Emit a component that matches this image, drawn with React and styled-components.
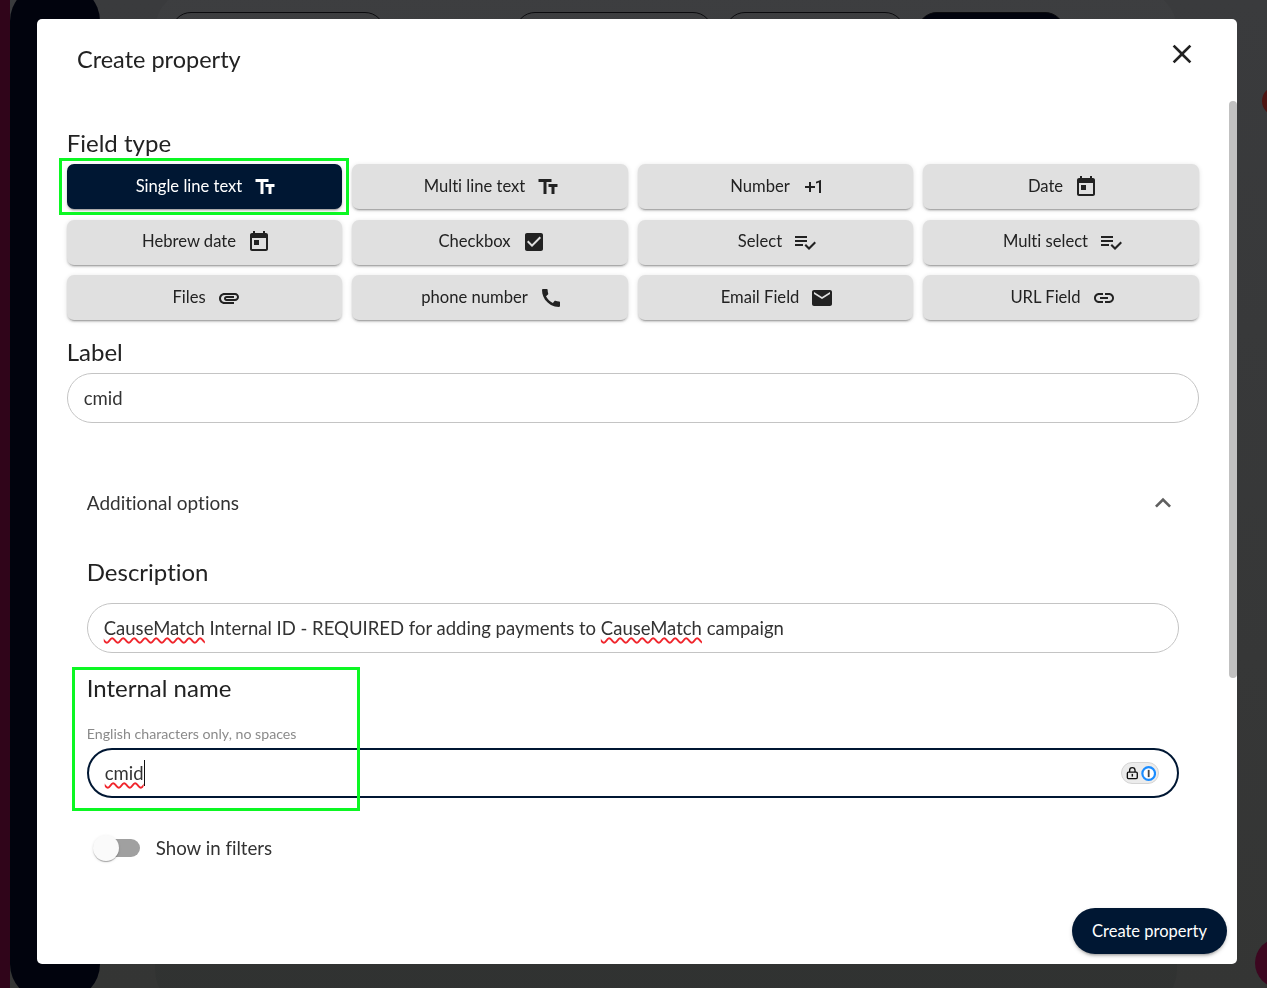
import React from "react";
import styled, { createGlobalStyle } from "styled-components";

const FONT = `Lato, "Noto Sans", "Liberation Sans", sans-serif`;

const GlobalStyle = createGlobalStyle`
  html, body {
    margin: 0;
    padding: 0;
    height: 100%;
    overflow: hidden;
    background: #38393b;
    font-family: ${FONT};
    font-variant-ligatures: none;
  }
  * { box-sizing: border-box; }
`;

const Shell = styled.div`
  display: flex;
  width: 1267px;
  height: 988px;
  overflow: hidden;
  background: linear-gradient(#3a3b3d, #343534);
`;

const Strip = styled.div`
  width: 10px;
  flex-shrink: 0;
  background: #30051a;
`;

const Sidebar = styled.div`
  width: 90px;
  flex-shrink: 0;
  margin: -15px 0 -12px;
  border-radius: 36px;
  background: #01030d;
`;

const Main = styled.div`
  flex: 1;
  display: flex;
  padding: 0 90px 0 55px;
`;

const TopPanel = styled.div`
  flex: 1;
  display: flex;
  margin-top: -10px;
  height: 1020px;
  padding: 22px 0 0 16px;
  border-radius: 40px;
  background: linear-gradient(#3d3e40, #303231);
`;

const TopPill = styled.div`
  width: ${(p) => p.$w}px;
  margin-right: ${(p) => p.$gap}px;
  height: 40px;
  border-radius: 20px;
  border: 1px solid #0b0b0e;
  background: ${(p) => (p.$filled ? "#01030d" : "transparent")};
`;

const Dot = styled.div`
  position: absolute;
  width: ${(p) => p.$size}px;
  height: ${(p) => p.$size}px;
  left: ${(p) => p.$x}px;
  top: ${(p) => p.$y}px;
  border-radius: 50%;
  background: ${(p) => p.$color};
`;

const Dialog = styled.div`
  position: fixed;
  left: 37px;
  top: 19px;
  width: 1200px;
  height: 945px;
  display: flex;
  flex-direction: column;
  border-radius: 5px;
  background: #fff;
  color: #222;
`;

const Header = styled.div`
  position: relative;
  height: 82px;
  flex-shrink: 0;
  padding: 23px 0 0 40px;
`;

const Title = styled.h2`
  margin: 0;
  font-size: 23.5px;
  line-height: 34px;
  font-weight: 400;
  color: #222;
`;

const CloseButton = styled.button`
  position: absolute;
  right: 39px;
  top: 19px;
  width: 32px;
  height: 32px;
  padding: 0;
  border: none;
  background: transparent;
  color: #222;
  font-size: 0;
`;

const Body = styled.div`
  position: relative;
  flex: 1;
  min-height: 0;
  overflow: hidden;
  padding: 28px 38px 0 29.75px;
`;

const ScrollThumb = styled.div`
  position: absolute;
  right: 0;
  top: 0;
  width: 8px;
  height: 577px;
  border-radius: 4px;
  background: #c1c1c1;
`;

const SectionLabel = styled.div`
  font-size: 24px;
  line-height: 28px;
  padding-bottom: 2px;
  color: #222;
  margin-top: ${(p) => p.$top || 0}px;
  margin-bottom: ${(p) => p.$bottom || 0}px;
`;

const TypeGrid = styled.div`
  display: grid;
  grid-template-columns: repeat(4, 275.5px);
  grid-auto-rows: 45px;
  column-gap: 10px;
  row-gap: 10.5px;
`;

const TypeButton = styled.button`
  position: relative;
  display: flex;
  align-items: center;
  justify-content: center;
  gap: 11px;
  border: none;
  border-radius: 7px;
  padding: 0 0 0 4px;
  font-family: ${FONT};
  font-size: 16.6px;
  font-variant-ligatures: none;
  color: ${(p) => (p.$active ? "#fff" : "#222")};
  background: ${(p) => (p.$active ? "#001733" : "#e0e0e0")};
  box-shadow: 0 3px 1px -2px rgba(0, 0, 0, 0.2), 0 2px 2px rgba(0, 0, 0, 0.14),
    0 1px 5px rgba(0, 0, 0, 0.12);
`;

const TypeText = styled.span`
  margin-bottom: 2px;
`;

const Highlight = styled.div`
  position: absolute;
  left: ${(p) => p.$left}px;
  top: ${(p) => p.$top}px;
  width: ${(p) => p.$w}px;
  height: ${(p) => p.$h}px;
  border: 3px solid #0cf723;
  pointer-events: none;
`;

const Field = styled.div`
  display: flex;
  align-items: center;
  height: 50px;
  padding: 0 17px 0 16px;
  border-radius: 25px;
  border: ${(p) => (p.$focused ? "2px solid #001733" : "1px solid #c4c4c4")};
  font-size: 18.5px;
  color: #333;
  margin-top: ${(p) => p.$top || 0}px;
`;

const Misspelled = styled.span`
  text-decoration: underline wavy #f0252c 1.5px;
  text-underline-offset: 2px;
`;

const Caret = styled.span`
  display: inline-block;
  width: 1px;
  height: 26px;
  background: #111;
`;

const LockBadge = styled.div`
  display: flex;
  align-items: center;
  gap: 2px;
  margin-left: auto;
  margin-right: 1px;
  width: 38px;
  height: 22px;
  padding: 0 2px 0 4px;
  border-radius: 11px;
  border: 1px solid #d4d4d4;
  background: #ececec;
`;

const Accordion = styled.div`
  margin-top: 56px;
  padding: 0 20px;
`;

const AccordionSummary = styled.div`
  display: flex;
  align-items: center;
  justify-content: space-between;
  height: 48px;
  font-size: 19px;
  color: #333;

  svg {
    color: #5f5f5f;
  }
`;

const SummaryText = styled.span`
  margin-bottom: 2px;
`;

const NameGroup = styled.div`
  position: relative;
  margin-top: 21px;
`;

const Hint = styled.div`
  margin-top: 21px;
  font-size: 14.2px;
  line-height: 18px;
  color: #8a8a8a;
`;

const ToggleRow = styled.div`
  display: flex;
  align-items: center;
  gap: 16px;
  height: 38px;
  margin-top: 31px;
  padding-left: 7px;
  font-size: 18.7px;
  color: #333;
`;

const ToggleTrack = styled.div`
  position: relative;
  width: 46px;
  height: 18px;
  border-radius: 9px;
  background: #a0a0a0;
`;

const ToggleThumb = styled.div`
  position: absolute;
  left: -1px;
  top: -4px;
  width: 26px;
  height: 26px;
  border-radius: 50%;
  background: #fafafa;
  box-shadow: 0 2px 1px -1px rgba(0, 0, 0, 0.2), 0 1px 1px rgba(0, 0, 0, 0.14),
    0 1px 3px rgba(0, 0, 0, 0.12);
`;

const Footer = styled.div`
  display: flex;
  justify-content: flex-end;
  padding: 0 10px 10px;
`;

const SubmitButton = styled.button`
  width: 155px;
  height: 46px;
  padding: 0;
  border: none;
  border-radius: 23px;
  background: #001733;
  color: #fff;
  font-family: ${FONT};
  font-size: 16.5px;
  font-variant-ligatures: none;
  box-shadow: 0 3px 3px -2px rgba(0, 0, 0, 0.3), 0 2px 4px rgba(0, 0, 0, 0.16);
`;

const Icon = ({ d, size = 24 }) => (
  <svg width={size} height={size} viewBox="0 0 24 24" fill="currentColor">
    <path d={d} />
  </svg>
);

const ICONS = {
  text: "M2.5 4v3h5v12h3V7h5V4zm19 5h-9v3h3v7h3v-7h3z",
  plusOne: "M10 7H8v4H4v2h4v4h2v-4h4v-2h-4V7zm10 11h-2V7.38L15 8.4V6.7L19.7 5h.3v13z",
  today:
    "M19 3h-1V1h-2v2H8V1H6v2H5c-1.11 0-1.99.9-1.99 2L3 19c0 1.1.89 2 2 2h14c1.1 0 2-.9 2-2V5c0-1.1-.9-2-2-2zm0 16H5V8h14v11zM7 10h5v5H7z",
  checkbox:
    "M19 3H5c-1.11 0-2 .9-2 2v14c0 1.1.89 2 2 2h14c1.11 0 2-.9 2-2V5c0-1.1-.89-2-2-2zm-9 14l-5-5 1.41-1.41L10 14.17l7.59-7.59L19 8l-9 9z",
  playlist:
    "M14 10H2v2h12v-2zm0-4H2v2h12V6zM2 16h8v-2H2v2zm19.5-4.5L23 13l-6.99 7-4.51-4.5L13 14l3.01 3 5.49-5.5z",
  attach:
    "M2 12.5C2 9.46 4.46 7 7.5 7H18c2.21 0 4 1.79 4 4s-1.79 4-4 4H9.5C8.12 15 7 13.88 7 12.5S8.12 10 9.5 10H17v2H9.41c-.55 0-.55 1 0 1H18c1.1 0 2-.9 2-2s-.9-2-2-2H7.5C5.57 9 4 10.57 4 12.5S5.57 16 7.5 16H17v2H7.5C4.46 18 2 15.54 2 12.5z",
  phone:
    "M20.01 15.38c-1.23 0-2.42-.2-3.53-.56-.35-.12-.74-.03-1.01.24l-1.57 1.97c-2.83-1.35-5.48-3.9-6.89-6.83l1.95-1.66c.27-.28.35-.67.24-1.02-.37-1.11-.56-2.3-.56-3.53 0-.54-.45-.99-.99-.99H4.19C3.65 3 3 3.24 3 3.99 3 13.28 10.73 21 20.01 21c.71 0 .99-.63.99-1.18v-3.45c0-.54-.45-.99-.99-.99z",
  email:
    "M20 4H4c-1.1 0-1.99.9-1.99 2L2 18c0 1.1.9 2 2 2h16c1.1 0 2-.9 2-2V6c0-1.1-.9-2-2-2zm0 4l-8 5-8-5V6l8 5 8-5v2z",
  link:
    "M3.9 12c0-1.71 1.39-3.1 3.1-3.1h4V7H7c-2.76 0-5 2.24-5 5s2.24 5 5 5h4v-1.9H7c-1.71 0-3.1-1.39-3.1-3.1zM8 13h8v-2H8v2zm9-6h-4v1.9h4c1.71 0 3.1 1.39 3.1 3.1s-1.39 3.1-3.1 3.1h-4V17h4c2.76 0 5-2.24 5-5s-2.24-5-5-5z",
  close:
    "M19 6.41 17.59 5 12 10.59 6.41 5 5 6.41 10.59 12 5 17.59 6.41 19 12 13.41 17.59 19 19 17.59 13.41 12z",
  expandLess: "m12 8-6 6 1.41 1.41L12 10.83l4.59 4.58L18 14z",
};

const FIELD_TYPES = [
  { label: "Single line text", icon: "text", active: true },
  { label: "Multi line text", icon: "text" },
  { label: "Number", icon: "plusOne" },
  { label: "Date", icon: "today" },
  { label: "Hebrew date", icon: "today" },
  { label: "Checkbox", icon: "checkbox" },
  { label: "Select", icon: "playlist" },
  { label: "Multi select", icon: "playlist" },
  { label: "Files", icon: "attach" },
  { label: "phone number", icon: "phone" },
  { label: "Email Field", icon: "email" },
  { label: "URL Field", icon: "link" },
];

const PasswordBadge = () => (
  <LockBadge>
    <svg width="14" height="14" viewBox="0 0 14 14">
      <path d="M4 6V4a3 3 0 0 1 6 0v2" fill="none" stroke="#111" strokeWidth="1.5" />
      <rect x="1.5" y="6" width="11" height="7.2" rx="1.2" fill="none" stroke="#111" strokeWidth="1.5" />
      <rect x="6.2" y="8" width="1.6" height="3" fill="#111" />
    </svg>
    <svg width="17" height="17" viewBox="0 0 17 17">
      <circle cx="8.5" cy="8.5" r="7" fill="#fff" stroke="#1a8cff" strokeWidth="2.4" />
      <rect x="7.5" y="4.5" width="2" height="8" fill="#444" />
    </svg>
  </LockBadge>
);

const App = () => {
  return (
    <>
      <GlobalStyle />
      <Shell>
        <Strip />
        <Sidebar />
        <Main>
          <TopPanel>
            <TopPill $w={214} $gap={130} />
            <TopPill $w={198} $gap={12} />
            <TopPill $w={180} $gap={12} />
            <TopPill $w={148} $gap={0} $filled />
          </TopPanel>
        </Main>
      </Shell>
      <Dot $size={30} $x={1262} $y={86} $color="#4e1512" />
      <Dot $size={50} $x={1255} $y={938} $color="#3c0720" />

      <Dialog>
        <Header>
          <Title>Create property</Title>
          <CloseButton aria-label="close">
            <Icon d={ICONS.close} size={32} />
          </CloseButton>
        </Header>

        <Body>
          <ScrollThumb />
          <SectionLabel $bottom={5}>Field type</SectionLabel>
          <TypeGrid>
            {FIELD_TYPES.map((t) => (
              <TypeButton key={t.label} $active={t.active}>
                <TypeText>{t.label}</TypeText>
                <Icon d={ICONS[t.icon]} />
                {t.active && <Highlight $left={-8} $top={-6} $w={290} $h={57} />}
              </TypeButton>
            ))}
          </TypeGrid>

          <SectionLabel $top={18} $bottom={5}>Label</SectionLabel>
          <Field>cmid</Field>

          <Accordion>
            <AccordionSummary>
              <SummaryText>Additional options</SummaryText>
              <Icon d={ICONS.expandLess} size={32} />
            </AccordionSummary>

            <SectionLabel $top={31}>Description</SectionLabel>
            <Field $top={15}>
              <span>
                <Misspelled>CauseMatch</Misspelled> Internal ID - REQUIRED for adding payments to{" "}
                <Misspelled>CauseMatch</Misspelled> campaign
              </span>
            </Field>

            <NameGroup>
              <Highlight $left={-15} $top={-7} $w={288} $h={144} />
              <SectionLabel>Internal name</SectionLabel>
              <Hint>English characters only, no spaces</Hint>
              <Field $top={5} $focused>
                <Misspelled>cmid</Misspelled>
                <Caret />
                <PasswordBadge />
              </Field>
            </NameGroup>

            <ToggleRow>
              <ToggleTrack>
                <ToggleThumb />
              </ToggleTrack>
              <span>Show in filters</span>
            </ToggleRow>
          </Accordion>
        </Body>

        <Footer>
          <SubmitButton>Create property</SubmitButton>
        </Footer>
      </Dialog>
    </>
  );
};

export default App;
